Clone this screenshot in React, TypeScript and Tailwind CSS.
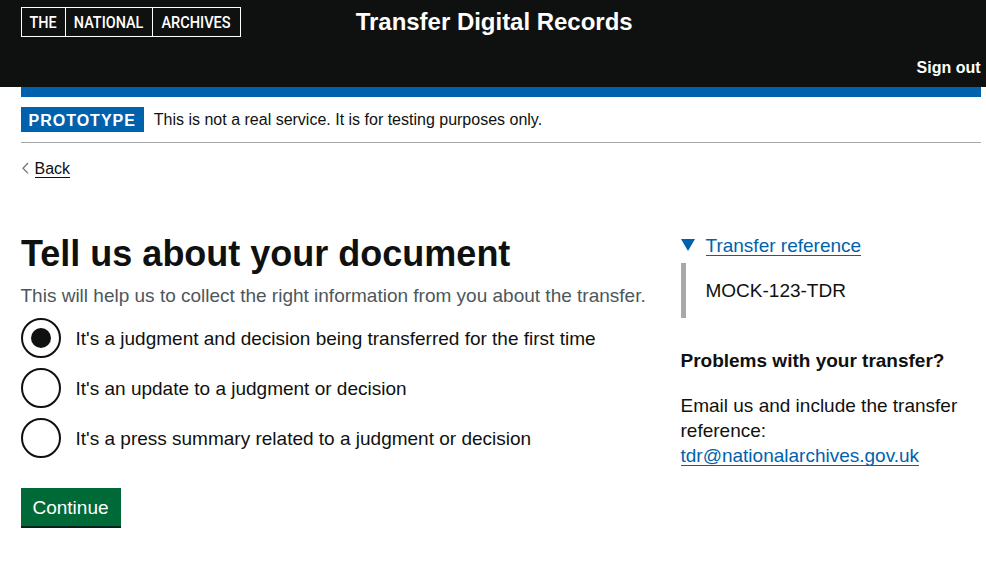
import React from "react";

const options = [
  "It's a judgment and decision being transferred for the first time",
  "It's an update to a judgment or decision",
  "It's a press summary related to a judgment or decision",
];

function Header() {
  return (
    <header className="h-[87px] bg-[#0f1110] text-white">
      <div className="flex h-[44px] items-start pl-[21px] pt-[7px]">
        <div className="flex h-[30px] w-[220px] border border-white font-['Roboto',sans-serif] text-[16px] font-medium leading-[29px]">
          <span className="flex w-[44px] justify-center border-r border-white"><span className="scale-x-[0.9]">THE</span></span>
          <span className="flex w-[87px] justify-center border-r border-white"><span className="scale-x-[0.9]">NATIONAL</span></span>
          <span className="flex flex-1 justify-center"><span className="scale-x-[0.91]">ARCHIVES</span></span>
        </div>
        <a className="ml-[114.700px] text-[24px] font-bold leading-[30px] tracking-[-0.02px]">Transfer Digital Records</a>
      </div>
      <div className="flex justify-end pr-[5.500px] pt-[14px] text-[16px] font-bold leading-[20px]">
        <a>Sign out</a>
      </div>
    </header>
  );
}

export default function App() {
  return (
    <div className="min-h-[575px] bg-white font-['Liberation_Sans',Arial,sans-serif] text-[#0f1110]">
      <Header />
      <div className="ml-[21px] mr-[5px]">
        <div className="h-[10px] bg-[#0062ad]" />
        <div className="flex h-[46px] items-start border-b border-[#a7a8aa] pt-[10px]">
          <strong className="h-[25px] w-[123px] bg-[#0062ad] pl-[7.500px] text-[16px] leading-[27px] tracking-[1px] text-white">PROTOTYPE</strong>
          <span className="ml-[9.800px] text-[16px] leading-[25px]">This is not a real service. It is for testing purposes only.</span>
        </div>
        <div className="flex h-[41px] items-start pt-[16px]">
          <svg className="mt-[3px]" width="9" height="13" viewBox="0 0 9 13" fill="none" stroke="#6f777b" strokeWidth="1.300"><path d="M7 1 2 6.200l5 5.200" /></svg>
          <a className="ml-[4.500px] h-[19px] border-b border-[#0f1110] text-[16px] leading-[20px]">Back</a>
        </div>
        <main className="flex pt-[50px]">
          <div className="w-[659.500px]">
            <h1 className="text-[36px] font-bold leading-[40px]">Tell us about your document</h1>
            <p className="-ml-[0.500px] mt-[9px] text-[19px] leading-[25px] text-[#4c575b]">This will help us to collect the right information from you about the transfer.</p>
            <div className="mt-[10px] flex flex-col gap-[10px]">
              {options.map((label, i) => (
                <label key={label} className="flex h-[40px] items-center">
                  <span className="flex size-[40px] items-center justify-center rounded-full border-2 border-[#0f1110]">
                    {i === 0 && <span className="size-[20px] rounded-full bg-[#0f1110]" />}
                  </span>
                  <span className="ml-[14.500px] text-[19px] leading-[25px]">{label}</span>
                </label>
              ))}
            </div>
            <button className="mt-[30px] block h-[40px] w-[100px] border-b-2 border-[#00231a] bg-[#006938] pr-px text-[19px] leading-[39px] text-white">Continue</button>
          </div>
          <aside className="w-[300.500px] text-[19px] leading-[25px]">
            <div className="flex h-[29px]">
              <svg className="ml-[0.500px] mt-[5px]" width="14" height="12" viewBox="0 0 14 12"><path d="M0 0h14L7 12z" fill="#0062ad" /></svg>
              <a className="-mt-px ml-[10.500px] h-[23px] border-b border-[#0062ad] text-[#0062ad]">Transfer reference</a>
            </div>
            <div className="ml-[0.500px] h-[55px] border-l-[5px] border-[#a7a8aa] pl-[19.500px] pt-[15px]">MOCK-123-TDR</div>
            <h2 className="mt-[30px] font-bold">Problems with your transfer?</h2>
            <p className="mt-[20px]">Email us and include the transfer reference:<br /><a className="inline-block h-[23px] border-b border-[#0062ad] text-[#0062ad]">tdr@nationalarchives.gov.uk</a></p>
          </aside>
        </main>
      </div>
    </div>
  );
}
